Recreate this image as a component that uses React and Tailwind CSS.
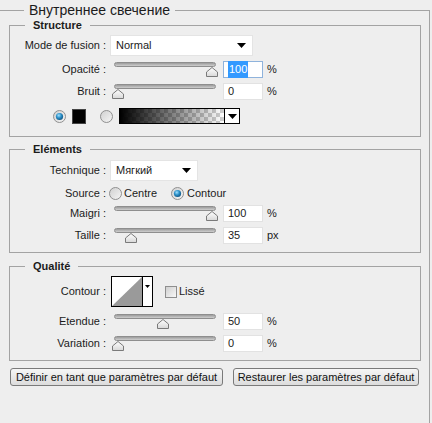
import React from 'react';

const font = { fontFamily: '"Liberation Sans", Arial, sans-serif' };

const Thumb = () => (
  <svg width="12" height="10" viewBox="0 0 12 10">
    <defs>
      <linearGradient id="th" x1="0" y1="0" x2="0" y2="1">
        <stop offset="0" stopColor="#ffffff" />
        <stop offset="1" stopColor="#d8d8d8" />
      </linearGradient>
    </defs>
    <path d="M6 0.5 L11.5 5 L11.5 9.5 L0.5 9.5 L0.5 5 Z" fill="url(#th)" stroke="#7a7a7a" />
  </svg>
);

const Slider = ({ pct }) => (
  <div className="relative w-[110px] h-[17px]">
    <div className="mx-[4px] mt-[2px] h-[5px] rounded-full border border-[#8e8e8e] bg-gradient-to-b from-[#9c9c9c] to-[#cfcfcf]" />
    <div className="absolute top-[5px]" style={{ left: 2 + pct * 94 }}>
      <Thumb />
    </div>
  </div>
);

const Radio = ({ on }) => (
  <svg width="13" height="13" viewBox="0 0 13 13">
    <defs>
      <radialGradient id="rb" cx="0.4" cy="0.35" r="0.7">
        <stop offset="0" stopColor="#9fe0ff" />
        <stop offset="0.5" stopColor="#2b8fc7" />
        <stop offset="1" stopColor="#0d4f7c" />
      </radialGradient>
      <linearGradient id="rg" x1="0" y1="0" x2="1" y2="1">
        <stop offset="0" stopColor="#cfcfcf" />
        <stop offset="1" stopColor="#f6f6f6" />
      </linearGradient>
    </defs>
    <circle cx="6.5" cy="6.5" r="6" fill="url(#rg)" stroke="#8f8f8f" />
    {on && <circle cx="6.5" cy="6.5" r="3.6" fill="url(#rb)" />}
  </svg>
);

const Caret = () => (
  <svg width="9" height="5" viewBox="0 0 9 5">
    <path d="M0 0 L9 0 L4.5 5 Z" fill="#000" />
  </svg>
);

const Label = ({ children }) => (
  <div className="w-[97px] text-right pr-[1px] shrink-0">{children}</div>
);

const Field = ({ value, unit, focused }) => (
  <div className="flex items-center">
    <div
      className={`ml-[3px] w-[40px] h-[17px] bg-white border flex items-center pl-[4px] ${
        focused ? 'border-[#8fb3dc]' : 'border-[#e2e2e2]'
      }`}
    >
      {focused ? <span className="bg-[#3399ff] text-white px-[1px]">{value}</span> : value}
    </div>
    <div className="ml-[4px]">{unit}</div>
  </div>
);

const SliderRow = ({ label, pct, value, unit, focused, className }) => (
  <div className={`flex items-center h-[17px] ${className}`}>
    <Label>{label}</Label>
    <div className="ml-[3px]">
      <Slider pct={pct} />
    </div>
    <Field value={value} unit={unit} focused={focused} />
  </div>
);

const Select = ({ value, width }) => (
  <div className={`${width} h-[21px] bg-white border border-[#e4e4e4] flex items-center justify-between pl-[5px] pr-[6px]`}>
    <span>{value}</span>
    <Caret />
  </div>
);

const Box = ({ title, className, children }) => (
  <fieldset className={`border border-[#a3a3a3] ${className}`}>
    <legend className="ml-[15px] px-2 font-bold leading-[13px]">{title}</legend>
    {children}
  </fieldset>
);

const Button = ({ children, width }) => (
  <button className={`${width} h-[18px] rounded-[3px] border border-[#7a7a7a] bg-gradient-to-b from-[#f6f6f6] to-[#dcdcdc] text-[#111] leading-none`}>
    {children}
  </button>
);

export default function App() {
  return (
    <div className="w-[432px] h-[423px] overflow-hidden bg-[#eeeeee] text-[11px] text-[#1b1b1b]" style={font}>
      <fieldset className="mt-[3px] w-[430px] border-t border-r border-[#a3a3a3] pl-[9px] pr-[8px] pb-[60px]">
        <legend className="ml-[15px] px-[5px] text-[14px] leading-[14px]">Внутреннее свечение</legend>

        <Box title="Structure" className="mt-[2px] pb-[12px]">
          <div className="pt-[3px]">
            <div className="flex items-center">
              <Label>Mode de fusion :</Label>
              <div className="ml-[3px]">
                <Select value="Normal" width="w-[143px]" />
              </div>
            </div>
            <SliderRow label="Opacité :" pct={1} value="100" unit="%" focused className="mt-[5px]" />
            <SliderRow label="Bruit :" pct={0} value="0" unit="%" className="mt-[5px]" />
            <div className="flex items-center mt-[8px] h-[16px]">
              <div className="ml-[43px]">
                <Radio on />
              </div>
              <div className="ml-[6px] w-[14px] h-[15px] bg-black border border-[#444]" />
              <div className="ml-[14px]">
                <Radio />
              </div>
              <div className="ml-[6px] w-[121px] h-[16px] border border-black flex">
                <div
                  className="w-[104px] h-full"
                  style={{
                    backgroundImage:
                      'linear-gradient(to right, #000 0%, rgba(0,0,0,0) 100%), repeating-conic-gradient(#cfcfcf 0% 25%, #ffffff 0% 50%)',
                    backgroundSize: '100% 100%, 8px 8px',
                  }}
                />
                <div className="flex-1 border-l border-black bg-white flex items-center justify-center">
                  <Caret />
                </div>
              </div>
            </div>
          </div>
        </Box>

        <Box title="Eléments" className="mt-[6px] pb-[8px]">
          <div className="pt-[4px]">
            <div className="flex items-center">
              <Label>Technique :</Label>
              <div className="ml-[3px]">
                <Select value="Мягкий" width="w-[88px]" />
              </div>
            </div>
            <div className="flex items-center mt-[6px] h-[12px]">
              <Label>Source :</Label>
              <div className="ml-[2px]">
                <Radio />
              </div>
              <span className="ml-[2px]">Centre</span>
              <div className="ml-[14px]">
                <Radio on />
              </div>
              <span className="ml-[3px]">Contour</span>
            </div>
            <SliderRow label="Maigri :" pct={1} value="100" unit="%" className="mt-[6px]" />
            <SliderRow label="Taille :" pct={0.14} value="35" unit="px" className="mt-[5px]" />
          </div>
        </Box>

        <Box title="Qualité" className="mt-[7px] pb-[8px]">
          <div className="pt-[3px]">
            <div className="flex items-center">
              <Label>Contour :</Label>
              <div className="ml-[4px] w-[42px] h-[31px] border border-black bg-white flex">
                <svg width="30" height="29" viewBox="0 0 30 29" className="block">
                  <path d="M0 29 L30 0 L30 29 Z" fill="#9a9a9a" />
                </svg>
                <div className="flex-1 border-l border-black flex justify-center pt-[8px]">
                  <svg width="5" height="3" viewBox="0 0 5 3">
                    <path d="M0 0 L5 0 L2.5 3 Z" fill="#000" />
                  </svg>
                </div>
              </div>
              <div className="ml-[12px] w-[12px] h-[12px] border border-[#8e8e8e] bg-gradient-to-br from-[#d0d0d0] to-[#f8f8f8]" />
              <span className="ml-[2px]">Lissé</span>
            </div>
            <SliderRow label="Etendue :" pct={0.48} value="50" unit="%" className="mt-[6px]" />
            <SliderRow label="Variation :" pct={0} value="0" unit="%" className="mt-[5px]" />
          </div>
        </Box>

        <div className="flex mt-[7px] pl-[1px] gap-[10px]">
          <Button width="w-[213px]">Définir en tant que paramètres par défaut</Button>
          <Button width="w-[186px]">Restaurer les paramètres par défaut</Button>
        </div>
      </fieldset>
    </div>
  );
}
